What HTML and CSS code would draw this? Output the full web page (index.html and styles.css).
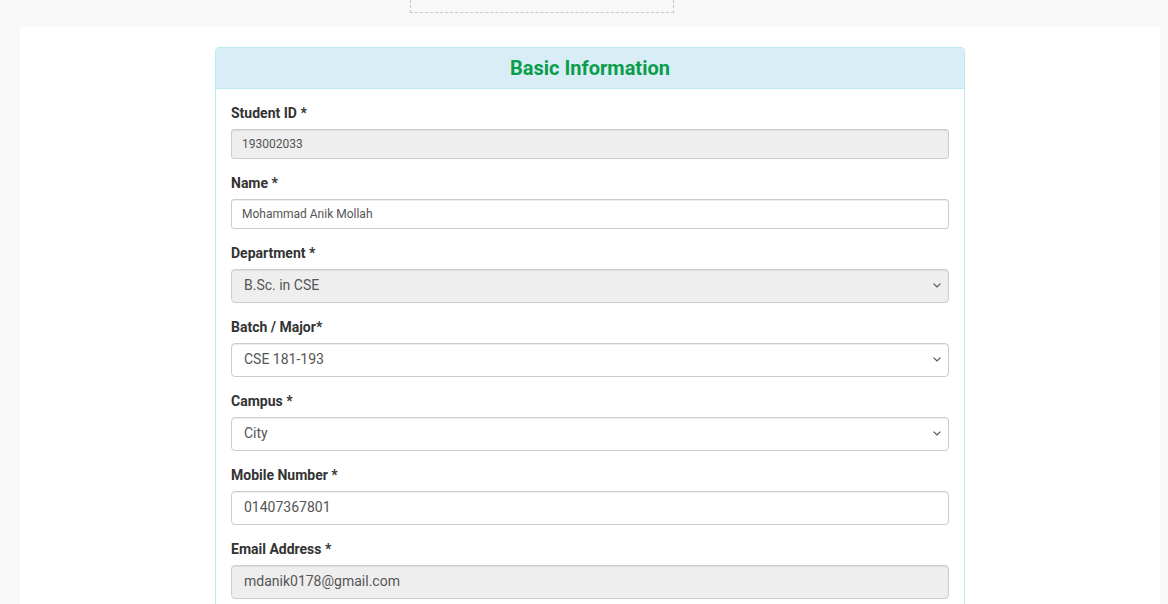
FILE: index.html
```html
<!DOCTYPE html>
<html>
<head>
<meta charset="utf-8">
<link rel="stylesheet" href="styles.css">
</head>
<body>
<div class="topbar"><div class="dashbox"></div></div>
<div class="container">
  <div class="panel">
    <div class="panel-heading"><h3 class="panel-title">Basic Information</h3></div>
    <div class="panel-body">
      <div class="form-group">
        <label class="lbl">Student ID *</label>
        <input class="ctl ctl-sm ro" value="193002033" readonly>
      </div>
      <div class="form-group">
        <label class="lbl">Name *</label>
        <input class="ctl ctl-sm" value="Mohammad Anik Mollah">
      </div>
      <div class="form-group">
        <label class="lbl">Department *</label>
        <div class="sel-wrap">
          <select class="ctl ro" disabled><option>B.Sc. in CSE</option></select>
          <svg class="chev" width="8" height="5" viewBox="0 0 8 5"><path d="M0.6 0.6l3.4 3.4 3.4-3.4" fill="none" stroke="#555" stroke-width="1.2"/></svg>
        </div>
      </div>
      <div class="form-group">
        <label class="lbl">Batch / Major*</label>
        <div class="sel-wrap">
          <select class="ctl"><option>CSE 181-193</option></select>
          <svg class="chev" width="8" height="5" viewBox="0 0 8 5"><path d="M0.6 0.6l3.4 3.4 3.4-3.4" fill="none" stroke="#555" stroke-width="1.2"/></svg>
        </div>
      </div>
      <div class="form-group">
        <label class="lbl">Campus *</label>
        <div class="sel-wrap">
          <select class="ctl"><option>City</option></select>
          <svg class="chev" width="8" height="5" viewBox="0 0 8 5"><path d="M0.6 0.6l3.4 3.4 3.4-3.4" fill="none" stroke="#555" stroke-width="1.2"/></svg>
        </div>
      </div>
      <div class="form-group">
        <label class="lbl">Mobile Number *</label>
        <input class="ctl" value="01407367801">
      </div>
      <div class="form-group">
        <label class="lbl">Email Address *</label>
        <input class="ctl ro" value="mdanik0178@gmail.com" readonly>
      </div>
    </div>
  </div>
</div>
</body>
</html>
```
FILE: styles.css
```css
* { box-sizing: border-box; }
html, body { margin: 0; padding: 0; }
body {
  background: #f8f8f8;
  font-family: Roboto, "Liberation Sans", sans-serif;
  font-size: 14px;
  line-height: 20px;
  color: #333;
  height: 604px;
  overflow: hidden;
}
.topbar { height: 27px; }
.dashbox {
  margin-left: 410px;
  width: 264px;
  height: 13px;
  border: 1px dashed #c8c8c8;
  border-top: none;
}
.container {
  margin: 0 8px 0 20px;
  background: #fff;
  padding-top: 20px;
  min-height: 600px;
  display: flex;
  justify-content: center;
}
.panel {
  width: 750px;
  border: 1px solid #bce8f1;
  border-radius: 4px;
  background: #fff;
  align-self: flex-start;
}
.panel-heading {
  background: #d9edf7;
  border-bottom: 1px solid #bce8f1;
  border-radius: 3px 3px 0 0;
  height: 41px;
  display: flex;
  align-items: center;
  justify-content: center;
}
.panel-title {
  margin: 0;
  font-size: 20px;
  font-weight: 700;
  color: #0a9d4a;
  line-height: 24px;
}
.panel-body { padding: 15px 15px 0 15px; }
.form-group { margin-bottom: 15px; }
.lbl {
  display: block;
  font-weight: 700;
  margin-top: -1px;
  margin-bottom: 6px;
  line-height: 20px;
}
.ctl {
  display: block;
  width: 100%;
  height: 34px;
  padding: 5px 12px 7px 12px;
  font-family: Roboto, "Liberation Sans", sans-serif;
  font-size: 14px;
  line-height: 20px;
  color: #555;
  background: #fff;
  border: 1px solid #ccc;
  border-radius: 4px;
  box-shadow: inset 0 1px 1px rgba(0,0,0,.075);
  outline: none;
  appearance: none;
  -webkit-appearance: none;
  margin: 0;
}
.ctl-sm {
  height: 30px;
  padding: 5px 10px;
  font-size: 12px;
  line-height: 18px;
  border-radius: 3px;
}
.ro { background: #eee; opacity: 1; }
select.ctl:disabled { color: #555; }
.sel-wrap { position: relative; }
.chev {
  position: absolute;
  right: 8px;
  top: 14px;
  pointer-events: none;
}
```
